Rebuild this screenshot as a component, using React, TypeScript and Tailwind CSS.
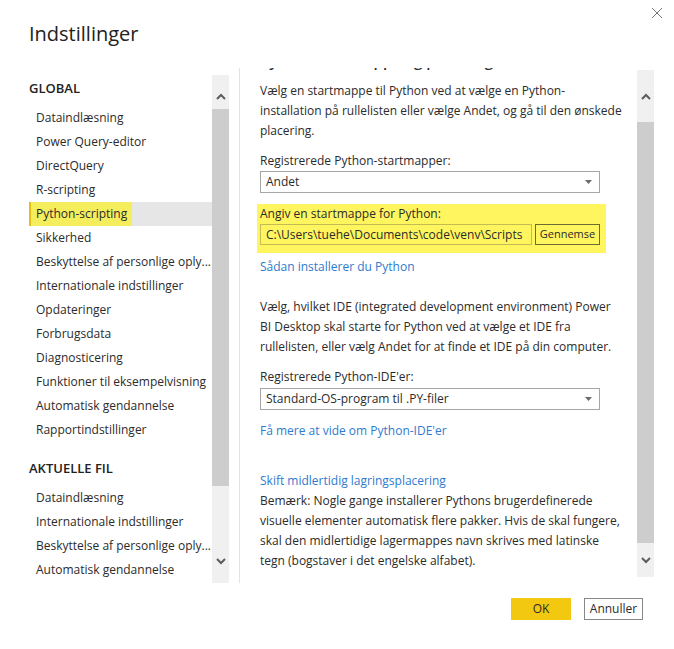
function Chevron({ down = false }: { down?: boolean }) {
  return (
    <svg width="10" height="7" viewBox="0 0 10 7" className={down ? "rotate-180" : ""}>
      <polyline points="1,6 5,2 9,6" fill="none" stroke="#5c5c5c" strokeWidth="2" />
    </svg>
  );
}

function Caret() {
  return (
    <svg width="7" height="4" viewBox="0 0 7 4">
      <polygon points="0,0 7,0 3.5,4" fill="#6b6b6b" />
    </svg>
  );
}

function Select({ value }: { value: string }) {
  return (
    <div className="flex h-[22px] w-[340px] items-center justify-between border border-[#a6a6a6] pl-[5px] pr-[7px]">
      <span>{value}</span>
      <Caret />
    </div>
  );
}

export default function App() {
  const globalItems = [
    "Dataindlæsning",
    "Power Query-editor",
    "DirectQuery",
    "R-scripting",
    "Python-scripting",
    "Sikkerhed",
    "Beskyttelse af personlige oply...",
    "Internationale indstillinger",
    "Opdateringer",
    "Forbrugsdata",
    "Diagnosticering",
    "Funktioner til eksempelvisning",
    "Automatisk gendannelse",
    "Rapportindstillinger",
  ];
  const fileItems = [
    "Dataindlæsning",
    "Internationale indstillinger",
    "Beskyttelse af personlige oply...",
    "Automatisk gendannelse",
  ];

  return (
    <div className="relative h-[649px] w-[674px] overflow-hidden bg-white font-['Open_Sans',sans-serif] text-[12px] text-[#2b2b2b]">
      <header className="h-[65px] pl-[29px] pt-[20px]">
        <h1 className="text-[20px] leading-[28px] text-[#222]">Indstillinger</h1>
      </header>
      <button className="absolute right-[10px] top-[6px] flex h-[14px] w-[14px] items-center justify-center">
        <svg width="12" height="12" viewBox="0 0 12 12">
          <path d="M1 1 L11 11 M11 1 L1 11" stroke="#777" strokeWidth="1" />
        </svg>
      </button>

      <div className="flex h-[518px]">
        {/* left nav */}
        <div className="ml-[29px] flex w-[200px] pt-[10px]">
          <nav className="w-[183px] overflow-hidden">
            <div className="pt-[3px] text-[13px] font-semibold leading-[20px] text-[#222]">GLOBAL</div>
            <ul className="mt-[8px]">
              {globalItems.map((item) =>
                item === "Python-scripting" ? (
                  <li key={item} className="flex h-[24px] items-center bg-[#e6e6e6]">
                    <span className="flex h-full items-center border-l-2 border-[#e3bf14] bg-[#f5ee5c] pl-[5px] pr-[5px]">
                      {item}
                    </span>
                  </li>
                ) : (
                  <li key={item} className="flex h-[24px] items-center truncate pl-[7px]">
                    {item}
                  </li>
                )
              )}
            </ul>
            <div className="mt-[16px] text-[13px] font-semibold leading-[20px] text-[#222]">AKTUELLE FIL</div>
            <ul className="mt-[8px]">
              {fileItems.map((item) => (
                <li key={item} className="flex h-[24px] items-center truncate pl-[7px]">
                  {item}
                </li>
              ))}
            </ul>
          </nav>
          <div className="flex h-[508px] w-[17px] flex-col bg-[#f0f0f0]">
            <div className="flex h-[34px] items-center justify-center pt-[8px]">
              <Chevron />
            </div>
            <div className="h-[377px] bg-[#cdcdcd]" />
            <div className="flex flex-1 items-end justify-center pb-[18px]">
              <Chevron down />
            </div>
          </div>
        </div>

        <div className="ml-[10px] mt-[3px] w-px bg-[#e3e3e3]" />

        {/* right content, scrolled so the heading is mostly out of view */}
        <div className="flex flex-1">
          <div className="mt-[3px] flex-1 overflow-hidden pl-[20px]">
            <h2 className="-mt-[17px] text-[15px] font-semibold leading-[20px] whitespace-nowrap">
              Python-startmappe og placering
            </h2>
            <p className="mt-[10px] leading-[20px] whitespace-nowrap">
              Vælg en startmappe til Python ved at vælge en Python-
              <br />
              installation på rullelisten eller vælge Andet, og gå til den ønskede
              <br />
              placering.
            </p>
            <div className="mt-[10px] leading-[20px]">Registrerede Python-startmapper:</div>
            <Select value="Andet" />
            <div className="-ml-[3px] mt-[11px] w-[349px] bg-[#fff55e] pb-[8px] pl-[3px]">
              <div className="leading-[20px]">Angiv en startmappe for Python:</div>
              <div className="flex gap-[3px]">
                <div className="flex h-[21px] w-[272px] items-center border border-[#c4bb55] pl-[5px]">
                  C:\Users\tuehe\Documents\code\venv\Scripts
                </div>
                <button className="flex h-[21px] w-[65px] items-center justify-center border border-[#6b6a30] text-[11px]">
                  Gennemse
                </button>
              </div>
            </div>
            <a className="mt-[4px] block leading-[20px] text-[#2e7bcf]">Sådan installerer du Python</a>
            <p className="mt-[20px] leading-[20px] whitespace-nowrap">
              Vælg, hvilket IDE (integrated development environment) Power
              <br />
              BI Desktop skal starte for Python ved at vælge et IDE fra
              <br />
              rullelisten, eller vælg Andet for at finde et IDE på din computer.
            </p>
            <div className="mt-[10px] leading-[20px]">Registrerede Python-IDE'er:</div>
            <div className="mt-px">
              <Select value="Standard-OS-program til .PY-filer" />
            </div>
            <a className="mt-[11px] block leading-[20px] text-[#2e7bcf]">Få mere at vide om Python-IDE'er</a>
            <a className="mt-[30px] block leading-[20px] text-[#2e7bcf]">Skift midlertidig lagringsplacering</a>
            <p className="leading-[20px] whitespace-nowrap">
              Bemærk: Nogle gange installerer Pythons brugerdefinerede
              <br />
              visuelle elementer automatisk flere pakker. Hvis de skal fungere,
              <br />
              skal den midlertidige lagermappes navn skrives med latinske
              <br />
              tegn (bogstaver i det engelske alfabet).
            </p>
          </div>
          <div className="mr-[20px] mt-[5px] flex h-[507px] w-[17px] flex-col bg-[#f0f0f0]">
            <div className="flex h-[52px] items-center justify-center">
              <Chevron />
            </div>
            <div className="h-[421px] bg-[#cdcdcd]" />
            <div className="flex flex-1 items-center justify-center">
              <Chevron down />
            </div>
          </div>
        </div>
      </div>

      <footer className="mr-[31px] mt-[15px] flex justify-end gap-[13px]">
        <button className="h-[22px] w-[60px] bg-[#f2c811] text-[12px]">OK</button>
        <button className="h-[22px] w-[59px] border border-[#8a8886] text-[12px]">Annuller</button>
      </footer>
    </div>
  );
}
